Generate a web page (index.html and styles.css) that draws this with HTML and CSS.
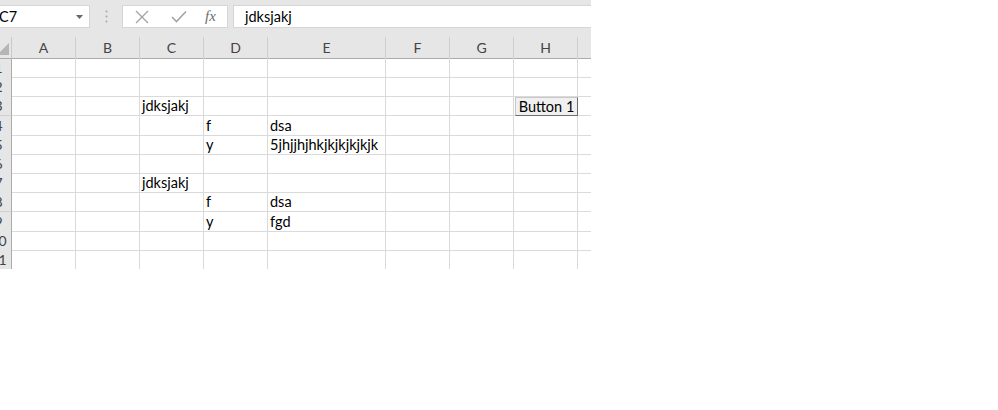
FILE: index.html
```html
<!DOCTYPE html>
<html>
<head>
<meta charset="utf-8">
<link rel="stylesheet" href="styles.css">
</head>
<body>
<div class="app">
  <div class="toolbar">
    <div class="namebox">
      <span class="name">C7</span>
      <svg class="caret" width="7" height="4" viewBox="0 0 7 4"><path d="M0 0H7L3.5 4Z" fill="#666"/></svg>
    </div>
    <div class="grip">
      <svg width="3" height="13" viewBox="0 0 3 13"><circle cx="1.5" cy="1.5" r="1" fill="#a6a6a6"/><circle cx="1.5" cy="6.5" r="1" fill="#a6a6a6"/><circle cx="1.5" cy="11.5" r="1" fill="#a6a6a6"/></svg>
    </div>
    <div class="fnbox">
      <svg class="icon" width="14" height="14" viewBox="0 0 14 14"><path d="M1 1L13 13M13 1L1 13" stroke="#a3a3a3" stroke-width="1.3" fill="none"/></svg>
      <svg class="icon" width="16" height="13" viewBox="0 0 16 13"><path d="M1 7L5.5 11.5L15 1.5" stroke="#a3a3a3" stroke-width="1.6" fill="none"/></svg>
      <span class="fx">fx</span>
    </div>
    <div class="formula">jdksjakj</div>
  </div>
  <div class="sheet">
    <div class="row head">
      <div class="corner"><span class="tri"></span></div>
      <div class="ch">A</div><div class="ch">B</div><div class="ch">C</div><div class="ch">D</div><div class="ch">E</div><div class="ch">F</div><div class="ch">G</div><div class="ch">H</div><div class="ch"></div>
    </div>
    <div class="row"><div class="rh">1</div><div class="c"></div><div class="c"></div><div class="c"></div><div class="c"></div><div class="c"></div><div class="c"></div><div class="c"></div><div class="c"></div><div class="c"></div></div>
    <div class="row"><div class="rh">2</div><div class="c"></div><div class="c"></div><div class="c"></div><div class="c"></div><div class="c"></div><div class="c"></div><div class="c"></div><div class="c"></div><div class="c"></div></div>
    <div class="row"><div class="rh">3</div><div class="c"></div><div class="c"></div><div class="c">jdksjakj</div><div class="c"></div><div class="c"></div><div class="c"></div><div class="c"></div><div class="c"></div><div class="c"></div></div>
    <div class="row"><div class="rh">4</div><div class="c"></div><div class="c"></div><div class="c"></div><div class="c">f</div><div class="c">dsa</div><div class="c"></div><div class="c"></div><div class="c"></div><div class="c"></div></div>
    <div class="row"><div class="rh">5</div><div class="c"></div><div class="c"></div><div class="c"></div><div class="c">y</div><div class="c">5jhjjhjhkjkjkjkjkjk</div><div class="c"></div><div class="c"></div><div class="c"></div><div class="c"></div></div>
    <div class="row"><div class="rh">6</div><div class="c"></div><div class="c"></div><div class="c"></div><div class="c"></div><div class="c"></div><div class="c"></div><div class="c"></div><div class="c"></div><div class="c"></div></div>
    <div class="row"><div class="rh">7</div><div class="c"></div><div class="c"></div><div class="c">jdksjakj</div><div class="c"></div><div class="c"></div><div class="c"></div><div class="c"></div><div class="c"></div><div class="c"></div></div>
    <div class="row"><div class="rh">8</div><div class="c"></div><div class="c"></div><div class="c"></div><div class="c">f</div><div class="c">dsa</div><div class="c"></div><div class="c"></div><div class="c"></div><div class="c"></div></div>
    <div class="row"><div class="rh">9</div><div class="c"></div><div class="c"></div><div class="c"></div><div class="c">y</div><div class="c">fgd</div><div class="c"></div><div class="c"></div><div class="c"></div><div class="c"></div></div>
    <div class="row"><div class="rh">10</div><div class="c"></div><div class="c"></div><div class="c"></div><div class="c"></div><div class="c"></div><div class="c"></div><div class="c"></div><div class="c"></div><div class="c"></div></div>
    <div class="row"><div class="rh">11</div><div class="c"></div><div class="c"></div><div class="c"></div><div class="c"></div><div class="c"></div><div class="c"></div><div class="c"></div><div class="c"></div><div class="c"></div></div>
    <div class="btn">Button 1</div>
  </div>
</div>
</body>
</html>
```
FILE: styles.css
```css
html, body {
  margin: 0;
  padding: 0;
  background: #ffffff;
}
body {
  font-family: "Lato", "Open Sans", sans-serif;
  color: #000;
}
.app {
  width: 591px;
  overflow: hidden;
}
.toolbar {
  height: 37px;
  background: #e6e6e6;
  display: flex;
  align-items: flex-start;
  padding-top: 5px;
  box-sizing: border-box;
}
.namebox {
  margin-left: -6px;
  width: 96px;
  height: 23px;
  background: #fff;
  border: 1px solid #d6d6d6;
  box-sizing: border-box;
  display: flex;
  align-items: center;
  justify-content: space-between;
  padding: 0 6px 0 4px;
}
.name {
  font-size: 14.5px;
}
.caret {
  margin-top: 1px;
}
.grip {
  width: 32px;
  height: 23px;
  display: flex;
  align-items: center;
  justify-content: center;
}
.fnbox {
  width: 106px;
  height: 23px;
  background: #fff;
  border: 1px solid #d6d6d6;
  box-sizing: border-box;
  display: flex;
  align-items: center;
  padding-left: 12px;
  gap: 22px;
}
.fx {
  font-family: "Liberation Serif", serif;
  font-style: italic;
  font-size: 15px;
  color: #6d6d6d;
  margin-left: -4px;
}
.formula {
  margin-left: 5px;
  flex: 1;
  height: 23px;
  background: #fff;
  border: 1px solid #d6d6d6;
  border-right: none;
  box-sizing: border-box;
  font-size: 14.5px;
  line-height: 21px;
  padding-left: 11px;
}
.sheet {
  position: relative;
  margin-left: -14px;
}
.row {
  display: grid;
  grid-template-columns: 26px 64px 64px 64px 64px 118px 64px 64px 64px 64px;
  height: 19.2px;
}
.row.head {
  height: 21px;
}
.corner {
  background: #e6e6e6;
  border-right: 1px solid #c9c9c9;
  border-bottom: 1px solid #ababab;
  box-sizing: border-box;
  position: relative;
}
.tri {
  position: absolute;
  right: 2px;
  bottom: 3px;
  width: 0;
  height: 0;
  border-left: 12px solid transparent;
  border-bottom: 12px solid #b5b5b5;
}
.ch {
  background: #e6e6e6;
  border-right: 1px solid #cfcfcf;
  border-bottom: 1px solid #ababab;
  box-sizing: border-box;
  text-align: center;
  font-size: 14px;
  line-height: 21px;
  color: #444;
}
.rh {
  background: #e6e6e6;
  border-right: 1px solid #ababab;
  border-bottom: 1px solid #d0d0d0;
  box-sizing: border-box;
  text-align: center;
  font-size: 14px;
  line-height: 19px;
  color: #444;
}
.c {
  border-right: 1px solid #dadada;
  border-bottom: 1px solid #dadada;
  box-sizing: border-box;
  font-size: 14.5px;
  line-height: 19px;
  padding-left: 2px;
  white-space: nowrap;
  overflow: visible;
}
.btn {
  position: absolute;
  left: 529px;
  top: 60px;
  width: 63px;
  height: 19px;
  box-sizing: border-box;
  background: #f0f0f0;
  border: 1px solid #c8c8c8;
  border-right-color: #6e6e6e;
  border-bottom-color: #6e6e6e;
  font-size: 14.5px;
  line-height: 17px;
  text-align: center;
}
```
